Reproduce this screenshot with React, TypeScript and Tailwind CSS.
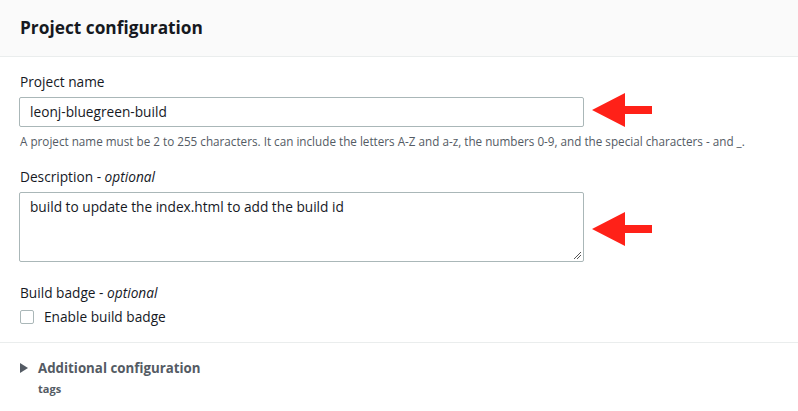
import React from "react";

function Arrow() {
  return (
    <svg width="60" height="36" viewBox="0 0 60 36" className="shrink-0">
      <polygon points="0,18 33,1 33,14 60,14 60,22 33,22 33,35" fill="#ff2118" />
    </svg>
  );
}

export default function App() {
  return (
    <div className="w-[798px] h-[411px] bg-white overflow-hidden text-[#16191f]" style={{ fontFamily: '"Open Sans", "Noto Sans", sans-serif' }}>
      <div className="h-[57px] bg-[#fafafa] border-b border-[#eaeded] px-5 flex items-center">
        <h2 className="text-[17.3px] font-bold leading-none">Project configuration</h2>
      </div>
      <div className="px-[19px] pt-[15px]">
        <div className="text-[13.7px] leading-[20px] pl-px">Project name</div>
        <div className="flex items-center mt-[4px]">
          <div className="w-[565px] h-[30px] border border-[#aab7b8] rounded-[2px] flex items-center px-[10px] text-[13.7px]">
            leonj-bluegreen-build
          </div>
          <div className="ml-[8px] -mt-[4px]"><Arrow /></div>
        </div>
        <div className="text-[11.7px] leading-[16px] text-[#545b64] mt-[5px] pl-px whitespace-nowrap">
          A project name must be 2 to 255 characters. It can include the letters A-Z and a-z, the numbers 0-9, and the special characters - and _.
        </div>
        <div className="text-[13.7px] leading-[20px] mt-[18px] pl-px">
          Description - <i>optional</i>
        </div>
        <div className="flex items-center mt-[5px]">
          <div className="relative w-[565px] h-[70px] border border-[#aab7b8] rounded-[2px] px-[10px] pt-[4px] text-[13.7px] leading-[20px]">
            build to update the index.html to add the build id
            <svg className="absolute right-[1px] bottom-[1px]" width="9" height="9" viewBox="0 0 9 9">
              <line x1="1" y1="8" x2="8" y2="1" stroke="#555" strokeWidth="1" />
              <line x1="4" y1="8" x2="8" y2="4" stroke="#555" strokeWidth="1" />
            </svg>
          </div>
          <div className="ml-[8px] mt-[3px]"><Arrow /></div>
        </div>
        <div className="text-[13.7px] leading-[20px] mt-[21px] pl-px">
          Build badge - <i>optional</i>
        </div>
        <div className="flex items-center mt-[4px] pl-px">
          <div className="w-[14px] h-[14px] border border-[#aab7b8] rounded-[2px] bg-white" />
          <span className="ml-[10px] text-[13.7px] leading-[20px]">Enable build badge</span>
        </div>
      </div>
      <div className="border-t border-[#eaeded] mt-[15px]" />
      <div className="px-5 pt-[15px]">
        <div className="flex items-center">
          <svg width="8" height="10" viewBox="0 0 8 10"><polygon points="0,0 8,5 0,10" fill="#545b64" /></svg>
          <span className="ml-[10px] text-[13.3px] font-bold text-[#545b64] leading-[20px]">Additional configuration</span>
        </div>
        <div className="ml-[18px] text-[11px] font-bold text-[#545b64] leading-[16px] mt-[3px]">tags</div>
      </div>
    </div>
  );
}
